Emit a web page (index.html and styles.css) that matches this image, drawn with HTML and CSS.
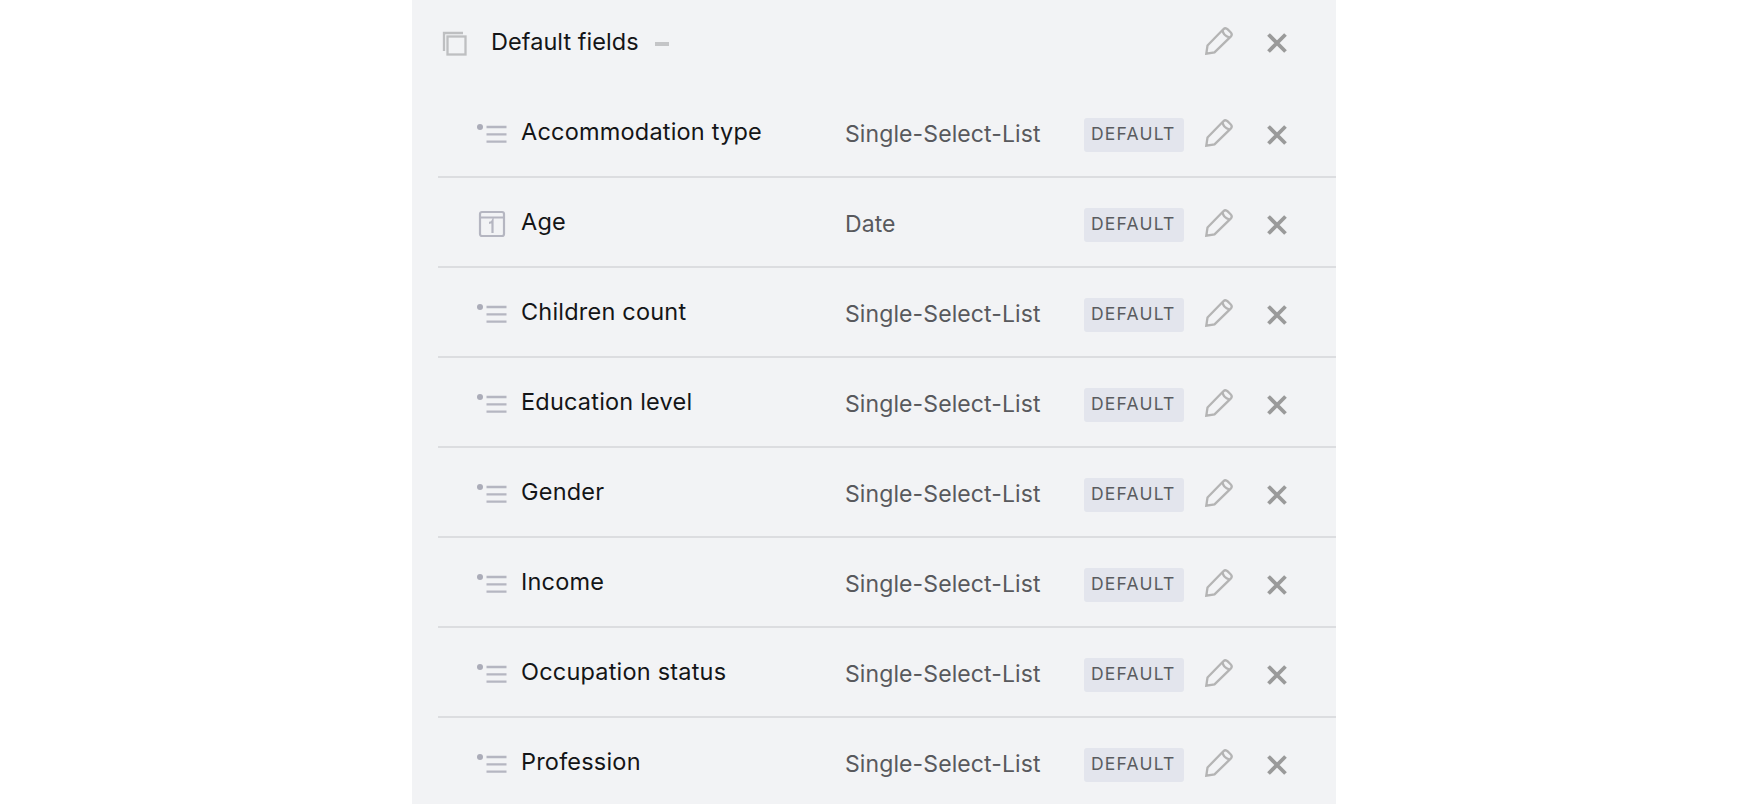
FILE: index.html
```
<!DOCTYPE html>
<html lang="en">
<head>
    <meta charset="UTF-8">
    <meta name="viewport" content="width=device-width, initial-scale=1.0">
    <title>Default fields</title>
    <link rel="stylesheet" href="styles.css">
</head>
<body>
    <!-- Shared icons -->
    <svg class="icon-defs" width="0" height="0">
        <symbol id="icon-group" viewBox="0 0 26 26">
            <path d="M2 20V2H21" />
            <rect x="5.5" y="5.5" width="18" height="18" />
        </symbol>
        <symbol id="icon-list" viewBox="0 0 32 24">
            <circle cx="3" cy="4" r="3" />
            <path d="M9.5 4H29.5M9.5 11.3H29.5M9.5 18.6H29.5" />
        </symbol>
        <symbol id="icon-date" viewBox="0 0 28 28">
            <rect x="2" y="2" width="24" height="24" rx="2" />
            <path d="M2 7.5H26M11 12.8Q13.5 12.8 14.5 11V23" />
        </symbol>
        <symbol id="icon-edit" viewBox="0 0 28 28">
            <path d="M1.3 26.7L2.5 18.5L18.3 2.3Q20.5 0.2 22.7 2.4L25.6 5.3Q27.8 7.5 25.7 9.7L9.5 25.4Z" />
            <path d="M17.6 3.2Q18 8.7 24.5 10.5" />
        </symbol>
        <symbol id="icon-remove" viewBox="0 0 20 20">
            <path d="M1.5 1.5L18.5 18.5M18.5 1.5L1.5 18.5" />
        </symbol>
    </svg>

    <div class="panel">
        <div class="group-header">
            <svg class="icon-group"><use href="#icon-group" /></svg>
            <span class="group-name">Default fields</span>
            <span class="collapse"></span>
            <svg class="icon-edit"><use href="#icon-edit" /></svg>
            <svg class="icon-remove"><use href="#icon-remove" /></svg>
        </div>

        <div class="field-list">
            <div class="field-row">
                <svg class="icon-list"><use href="#icon-list" /></svg>
                <span class="field-name">Accommodation type</span>
                <span class="field-type">Single-Select-List</span>
                <span class="badge">DEFAULT</span>
                <svg class="icon-edit"><use href="#icon-edit" /></svg>
                <svg class="icon-remove"><use href="#icon-remove" /></svg>
            </div>
            <div class="field-row">
                <svg class="icon-date"><use href="#icon-date" /></svg>
                <span class="field-name">Age</span>
                <span class="field-type">Date</span>
                <span class="badge">DEFAULT</span>
                <svg class="icon-edit"><use href="#icon-edit" /></svg>
                <svg class="icon-remove"><use href="#icon-remove" /></svg>
            </div>
            <div class="field-row">
                <svg class="icon-list"><use href="#icon-list" /></svg>
                <span class="field-name">Children count</span>
                <span class="field-type">Single-Select-List</span>
                <span class="badge">DEFAULT</span>
                <svg class="icon-edit"><use href="#icon-edit" /></svg>
                <svg class="icon-remove"><use href="#icon-remove" /></svg>
            </div>
            <div class="field-row">
                <svg class="icon-list"><use href="#icon-list" /></svg>
                <span class="field-name">Education level</span>
                <span class="field-type">Single-Select-List</span>
                <span class="badge">DEFAULT</span>
                <svg class="icon-edit"><use href="#icon-edit" /></svg>
                <svg class="icon-remove"><use href="#icon-remove" /></svg>
            </div>
            <div class="field-row">
                <svg class="icon-list"><use href="#icon-list" /></svg>
                <span class="field-name">Gender</span>
                <span class="field-type">Single-Select-List</span>
                <span class="badge">DEFAULT</span>
                <svg class="icon-edit"><use href="#icon-edit" /></svg>
                <svg class="icon-remove"><use href="#icon-remove" /></svg>
            </div>
            <div class="field-row">
                <svg class="icon-list"><use href="#icon-list" /></svg>
                <span class="field-name">Income</span>
                <span class="field-type">Single-Select-List</span>
                <span class="badge">DEFAULT</span>
                <svg class="icon-edit"><use href="#icon-edit" /></svg>
                <svg class="icon-remove"><use href="#icon-remove" /></svg>
            </div>
            <div class="field-row">
                <svg class="icon-list"><use href="#icon-list" /></svg>
                <span class="field-name">Occupation status</span>
                <span class="field-type">Single-Select-List</span>
                <span class="badge">DEFAULT</span>
                <svg class="icon-edit"><use href="#icon-edit" /></svg>
                <svg class="icon-remove"><use href="#icon-remove" /></svg>
            </div>
            <div class="field-row">
                <svg class="icon-list"><use href="#icon-list" /></svg>
                <span class="field-name">Profession</span>
                <span class="field-type">Single-Select-List</span>
                <span class="badge">DEFAULT</span>
                <svg class="icon-edit"><use href="#icon-edit" /></svg>
                <svg class="icon-remove"><use href="#icon-remove" /></svg>
            </div>
        </div>
    </div>
</body>
</html>
```
FILE: styles.css
```
body {
    margin: 0;
    height: 804px;
    overflow: hidden;
    background-color: #fff;
    font-family: 'Inter', sans-serif;
    font-size: 23.5px;
    line-height: 30px;
    color: #141517;
}
svg {
    display: block;
    fill: none;
}
.icon-defs {
    display: none;
}
.panel {
    width: 924px;
    height: 804px;
    margin-left: 412px;
    overflow: hidden;
    background-color: #f2f3f5;
}

/* Group header */
.group-header {
    display: flex;
    align-items: center;
    box-sizing: border-box;
    height: 88px;
    padding: 0 49px 4px 30px;
}
.group-name {
    width: 147px;
    margin-left: 23px;
    letter-spacing: 0.05px;
    white-space: nowrap;
}
.collapse {
    width: 14px;
    height: 4px;
    margin-left: 17px;
    margin-top: 4px;
    background-color: #c4c5c7;
}
.group-header .icon-edit {
    margin-top: -2px;
    margin-left: auto;
    margin-right: 34px;
}
.group-header .icon-remove {
    margin-top: 1px;
}

/* Field rows */
.field-list {
    margin-left: 26px;
}
.field-row {
    display: grid;
    grid-template-columns: 44px 324px 239px 121px 62px 20px;
    align-items: center;
    height: 88px;
    padding-left: 39px;
    border-bottom: 2px solid #dcdde0;
}
.field-name {
    letter-spacing: 0.2px;
}
.field-type {
    padding-top: 4px;
    font-size: 23px;
    letter-spacing: 0.1px;
    color: #58595d;
}
.badge {
    box-sizing: border-box;
    width: 100px;
    height: 34px;
    margin-top: 6px;
    padding-left: 7px;
    border-radius: 3px;
    background-color: #e3e5ed;
    font-size: 17.5px;
    line-height: 31px;
    letter-spacing: 1.2px;
    color: #5a5c60;
}

/* Icons */
.icon-group {
    width: 26px;
    height: 26px;
    margin-top: 3px;
    stroke: #bebfc1;
    stroke-width: 2.3;
}
.icon-list {
    width: 32px;
    height: 24px;
    margin-top: 6px;
    stroke: #b5b6c1;
    stroke-width: 2.3;
}
#icon-list circle {
    fill: #abacb8;
    stroke: none;
}
.icon-date {
    width: 28px;
    height: 28px;
    margin-top: 4px;
    margin-left: 1px;
    stroke: #b5b6c1;
    stroke-width: 2.2;
}
.icon-edit {
    width: 28px;
    height: 28px;
    margin-top: 1px;
    stroke: #b4b4b4;
    stroke-width: 2.3;
}
.icon-remove {
    width: 20px;
    height: 20px;
    margin-top: 6px;
    stroke: #9a9a9a;
    stroke-width: 3.8;
}
```
